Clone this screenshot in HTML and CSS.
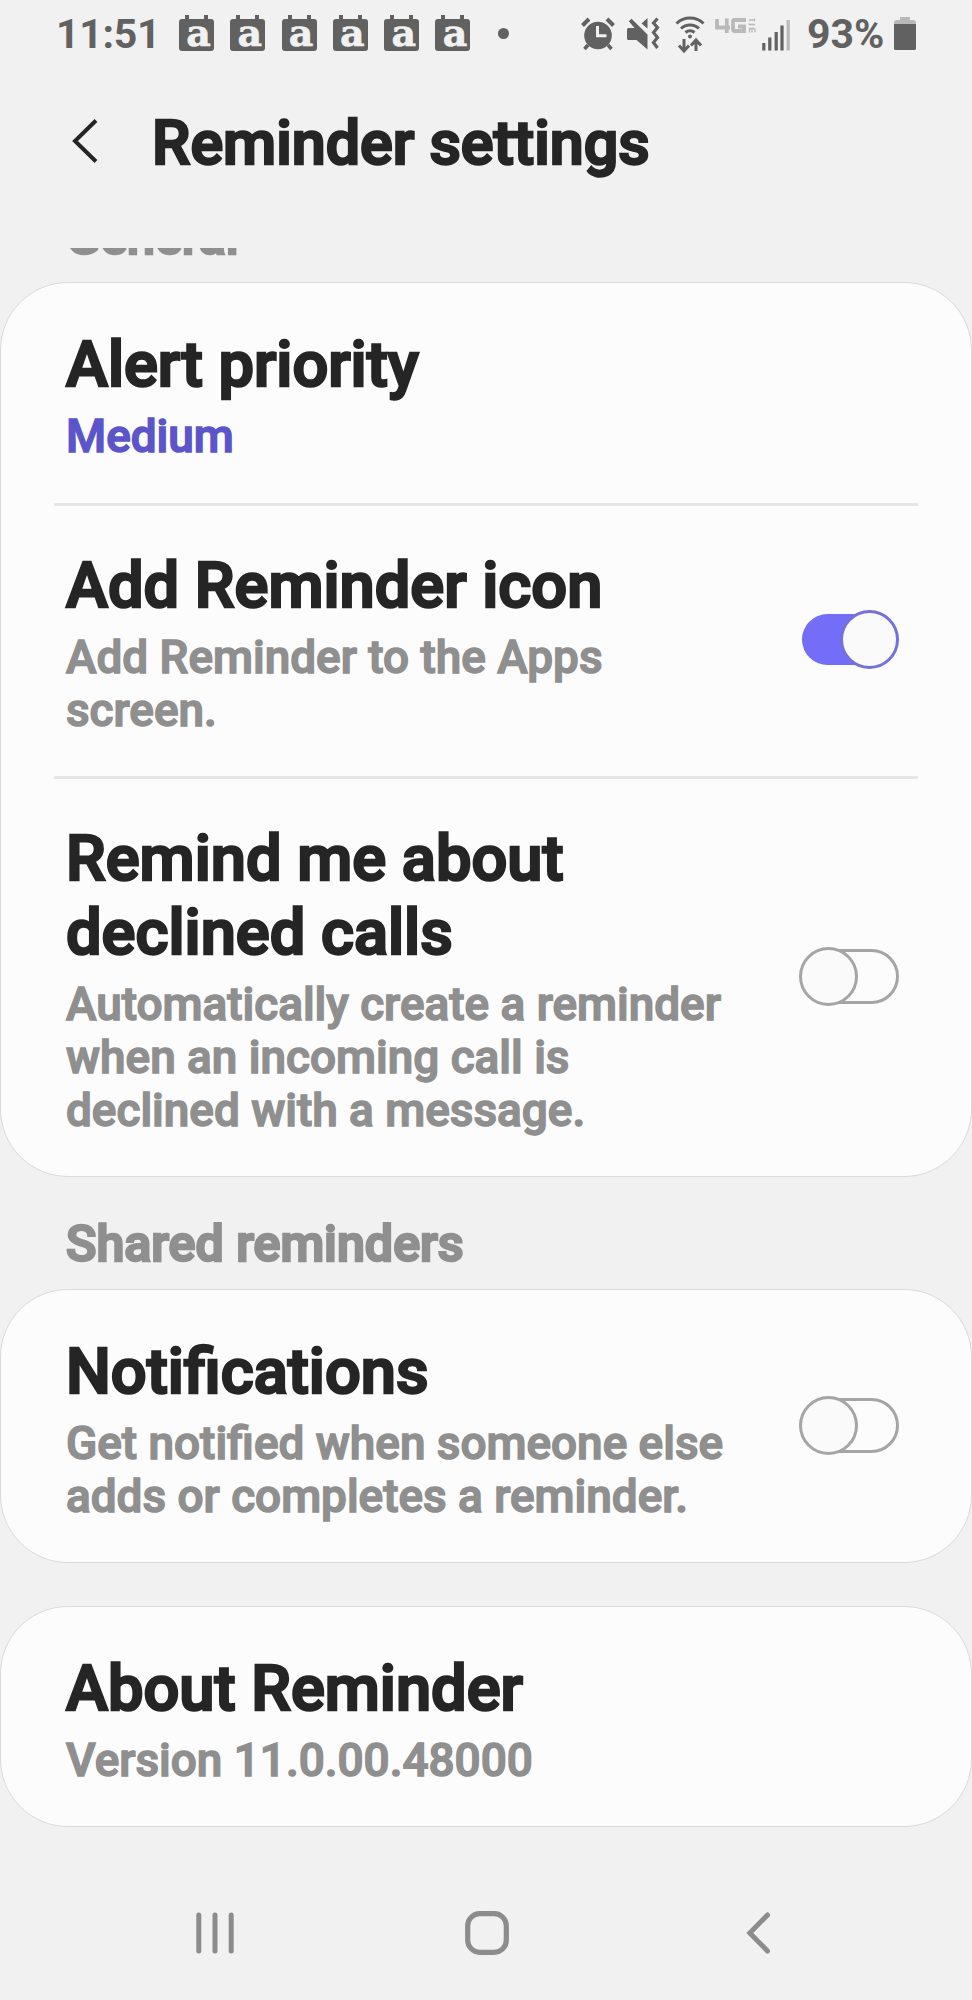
FILE: index.html
```html
<!DOCTYPE html>
<html lang="en">
<head>
    <meta charset="UTF-8">
    <meta name="viewport" content="width=device-width, initial-scale=1.0">
    <title>Reminder settings</title>
    <link rel="stylesheet" href="styles.css">
</head>
<body>
    <div class="status-bar">
        <span class="time">11:51</span>
        <div class="notifications">
            <span class="calendar">a</span>
            <span class="calendar">a</span>
            <span class="calendar">a</span>
            <span class="calendar">a</span>
            <span class="calendar">a</span>
            <span class="calendar">a</span>
        </div>
        <span class="more-dot"></span>
        <div class="indicators">
            <svg width="34" height="36" viewBox="0 0 34 36" fill="none" stroke="#616161">
                <circle cx="17" cy="19.500" r="13.800" fill="#616161" stroke="none"/>
                <path d="M1.500 9.500l6.500-6.500M32.500 9.500L26 3" stroke-width="4"/>
                <path d="M7 29l-3.500 4M27 29l3.500 4" stroke-width="3.500"/>
                <path d="M16.500 10v9.800h9" stroke="#f1f1f1" stroke-width="3"/>
            </svg>
            <svg class="mute" width="33" height="36" viewBox="0 0 33 36">
                <path d="M0 13.500q0-1.500 1.500-1.500H7.500L1.800 5.200 4.600 2.800 20.500 18.500V33.500L9.500 24H1.500Q0 24 0 22.500z" fill="#616161"/>
                <path d="M20.500 2v10.500L14.500 7.500z" fill="#616161"/>
                <path d="M30.500 2.500l-4 4.500 4 4.500-4 5 4 5-4 5 4 5.500" fill="none" stroke="#616161" stroke-width="3.200"/>
            </svg>
            <svg class="wifi" width="30" height="38" viewBox="0 0 30 38" fill="none" stroke="#616161">
                <path d="M1.500 8.500a19.500 19.500 0 0 1 27 0M6 13.500a13 13 0 0 1 18 0M10.500 17.500a7 7 0 0 1 9 0" stroke-width="3"/>
                <circle cx="15" cy="21.500" r="2" fill="#616161" stroke="none"/>
                <path d="M9 24v12M4 30.500l5 5.500 5-5.500M21 36V25M16 30.500l5-5.500 5 5.500" stroke-width="3"/>
            </svg>
            <svg class="network" width="41" height="36" viewBox="0 0 41 36" fill="none" stroke="#b9b9b9">
                <path d="M2 3v8.500h13M11.800 2.500V17M31 4H19.500q-1.500 0-1.500 1.500v8q0 1.500 1.500 1.500H29V10.500H23" stroke-width="3.800"/>
                <path d="M39.500 2.500v3M34 4h5.500M34 8.500h6M34 8.500v-1M39.500 12.500h-5v4M37 12.500v4M40 12.500v4" stroke-width="1.300"/>
            </svg>
            <svg class="signal" width="28" height="36" viewBox="0 0 28 36" fill="none" stroke="#616161" stroke-width="3.200">
                <path d="M1.800 27v7.500M7.800 21.500v13M14.200 16v18.500M20 9.500v25"/>
                <path d="M26.200 4v30.500" stroke="#b9b9b9"/>
            </svg>
            <span class="percent">93%</span>
            <svg class="battery" width="22" height="34" viewBox="0 0 22 34">
                <path d="M6 0h10v3h3q3 0 3 3v2H0V6q0-3 3-3h3z" fill="#b9b9b9"/>
                <path d="M0 7h22v24.500q0 1.500-1.500 1.500h-19Q0 33 0 31.500z" fill="#616161"/>
            </svg>
        </div>
    </div>

    <header class="app-bar">
        <svg class="back" width="26" height="44" viewBox="0 0 26 44" fill="none" stroke="#252525" stroke-width="4">
            <path d="M24 1.500L3 22l21 20.500"/>
        </svg>
        <h1>Reminder settings</h1>
    </header>

    <main>
        <h2 class="first">General</h2>
        <div class="card">
            <div class="row">
                <div class="text">
                    <h3>Alert priority</h3>
                    <p class="value">Medium</p>
                </div>
            </div>
            <div class="row">
                <div class="text">
                    <h3>Add Reminder icon</h3>
                    <p>Add Reminder to the Apps screen.</p>
                </div>
                <div class="switch on"><span class="track"></span><span class="thumb"></span></div>
            </div>
            <div class="row">
                <div class="text">
                    <h3>Remind me about declined calls</h3>
                    <p>Automatically create a reminder when an incoming call is declined with a message.</p>
                </div>
                <div class="switch"><span class="track"></span><span class="thumb"></span></div>
            </div>
        </div>

        <h2>Shared reminders</h2>
        <div class="card">
            <div class="row">
                <div class="text">
                    <h3>Notifications</h3>
                    <p>Get notified when someone else adds or completes a reminder.</p>
                </div>
                <div class="switch"><span class="track"></span><span class="thumb"></span></div>
            </div>
        </div>

        <div class="card about">
            <div class="row">
                <div class="text">
                    <h3>About Reminder</h3>
                    <p>Version 11.0.00.48000</p>
                </div>
            </div>
        </div>
    </main>

    <nav class="nav-bar">
        <svg width="40" height="44" viewBox="0 0 40 44" stroke="#8c8c8c" stroke-width="5" stroke-linecap="round">
            <path d="M3.800 4v36M20 4v36M36.200 4v36"/>
        </svg>
        <svg class="home" width="44" height="44" viewBox="0 0 44 44">
            <rect x="2.700" y="2.700" width="38.600" height="38.600" rx="12" fill="none" stroke="#8c8c8c" stroke-width="5.200"/>
        </svg>
        <svg width="25" height="44" viewBox="0 0 25 44" fill="none" stroke="#8c8c8c" stroke-width="5" stroke-linecap="round">
            <path d="M21.500 4L3.800 22l17.700 18"/>
        </svg>
    </nav>
</body>
</html>
```

FILE: styles.css
```css
* {
    box-sizing: border-box;
}
body {
    margin: 0;
    height: 2000px;
    display: flex;
    flex-direction: column;
    background-color: #f1f1f1;
    color: #252525;
    font-family: Roboto, sans-serif;
}
h1, h2, h3, p {
    margin: 0;
}
svg {
    display: block;
    flex: none;
}

/* status bar */
.status-bar {
    height: 67px;
    padding: 0 56px 0 56px;
    display: flex;
    align-items: center;
    color: #616161;
}
.time, .percent {
    font-size: 41px;
    line-height: 50px;
    font-weight: 700;
}
.time {
    width: 123px;
    letter-spacing: -0.300px;
}
.notifications {
    display: flex;
    gap: 16.300px;
    padding-top: 3px;
}
.calendar {
    position: relative;
    width: 35px;
    height: 32px;
    padding-left: 4px;
    border-radius: 3px;
    background-color: #616161;
    color: #f1f1f1;
    font: bold 38px/27px "DejaVu Serif", serif;
    text-align: center;
    -webkit-text-stroke: 0.600px #f1f1f1;
}
/* binder rings on top of the calendar */
.calendar::before, .calendar::after {
    content: "";
    position: absolute;
    top: -4px;
    width: 4px;
    height: 5px;
    background-color: #616161;
}
.calendar::before {
    left: 6px;
}
.calendar::after {
    right: 6px;
}
.more-dot {
    width: 11px;
    height: 11px;
    margin-left: 28px;
    border-radius: 50%;
    background-color: #616161;
}
.indicators {
    margin-left: auto;
    display: flex;
    align-items: center;
}
.mute {
    margin-left: 12px;
}
.wifi {
    margin-left: 15px;
}
.network {
    margin-left: 10px;
}
.signal {
    margin-left: 6px;
}
.percent {
    width: 87px;
    margin-left: 17px;
}

/* app bar */
.app-bar {
    height: 181px;
    padding: 39px 0 0 72px;
    display: flex;
    align-items: flex-start;
}
.back {
    margin-top: 13px;
}
h1 {
    margin-left: 54px;
    font-size: 61px;
    line-height: 74px;
    font-weight: 500;
    -webkit-text-stroke: 2.500px #252525;
}

/* settings list */
main {
    overflow: hidden;
}
h2 {
    margin: 38px 0 16px 66px;
    font-size: 50.200px;
    line-height: 58px;
    font-weight: 500;
    color: #8f8f8f;
    -webkit-text-stroke: 2.500px #8f8f8f;
}
h2.first {
    margin-top: -40px;
}
.card {
    padding: 0 53px;
    border: 1px solid #dadada;
    border-radius: 68px;
    background-color: #fcfcfc;
}
.about {
    margin-top: 43px;
}
.row {
    padding: 44px 19px 39px 12px;
    display: flex;
    align-items: center;
    justify-content: space-between;
}
.row:first-child:not(:only-child) {
    padding-bottom: 40px;
}
.row + .row {
    padding-top: 42px;
    border-top: 3px solid #e6e6e6;
}
.text {
    width: 675px;
}
h3 {
    font-size: 63.200px;
    line-height: 74px;
    font-weight: 500;
    -webkit-text-stroke: 2.500px #252525;
}
p {
    margin-top: 9px;
    font-size: 45.900px;
    line-height: 53px;
    font-weight: 500;
    color: #8f8f8f;
    -webkit-text-stroke: 1.500px #8f8f8f;
}
.value {
    color: #5b55c9;
    -webkit-text-stroke-color: #5b55c9;
}

/* switches */
.switch {
    width: 100px;
    height: 59px;
    margin-bottom: 6px;
    display: grid;
    align-items: center;
}
.track, .thumb {
    grid-area: 1 / 1;
}
.track {
    height: 55px;
    margin-left: 12px;
    border: 3px solid #a5a5a5;
    border-radius: 28px;
}
.thumb {
    width: 59px;
    height: 59px;
    border: 3px solid #a5a5a5;
    border-radius: 50%;
    background-color: #fafafa;
}
.on .track {
    height: 51px;
    margin: 0 12px 0 3px;
    border: none;
    background-color: #736df8;
}
.on .thumb {
    justify-self: end;
    border-color: #7671d9;
}

/* navigation bar */
.nav-bar {
    margin-top: auto;
    height: 135px;
    padding: 0 201px 0 195px;
    display: flex;
    align-items: center;
    justify-content: space-between;
}
.home {
    margin-right: 7px;
}
```
